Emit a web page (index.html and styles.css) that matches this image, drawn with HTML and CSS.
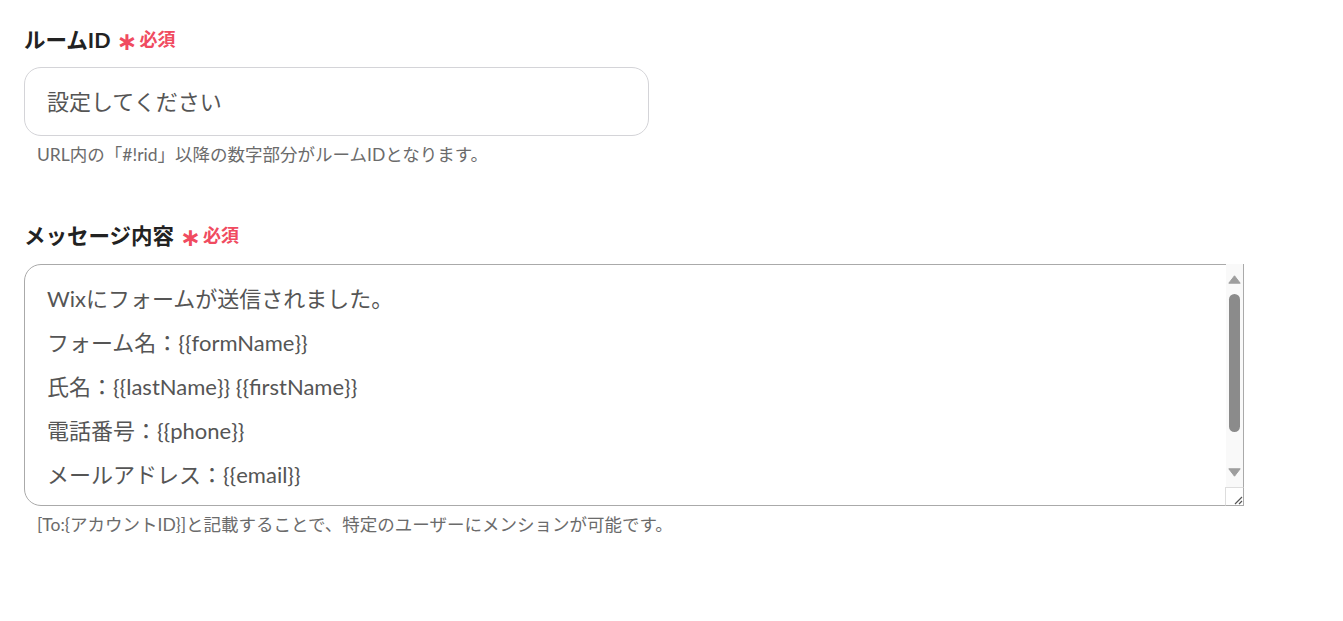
FILE: index.html
```html
<!DOCTYPE html>
<html lang="ja">
<head>
  <meta charset="UTF-8">
  <link rel="stylesheet" href="styles.css">
  <title>Chatwork 設定</title>
</head>
<body>

<div class="form">
  <div class="field">
    <label class="label">ルームID<span class="req"><span class="star">∗</span>必須</span></label>
    <input type="text" class="input" placeholder="設定してください">
    <p class="help">URL内の「#!rid」以降の数字部分がルームIDとなります。</p>
  </div>

  <div class="field">
    <label class="label">メッセージ内容<span class="req"><span class="star">∗</span>必須</span></label>
    <div class="textarea-wrap">
      <textarea class="textarea">Wixにフォームが送信されました。
フォーム名：{{formName}}
氏名：{{lastName}} {{firstName}}
電話番号：{{phone}}
メールアドレス：{{email}}
</textarea>
      <div class="scrollbar">
        <svg class="arrow" width="13" height="9" viewBox="0 0 13 9"><path d="M6.5 0.8 L12.2 8.2 L0.8 8.2 Z" fill="#9e9e9e" stroke="#9e9e9e" stroke-linejoin="round"/></svg>
        <div class="scroll-track"><div class="scroll-thumb"></div></div>
        <svg class="arrow" width="13" height="9" viewBox="0 0 13 9"><path d="M0.8 0.8 L12.2 0.8 L6.5 8.2 Z" fill="#9e9e9e" stroke="#9e9e9e" stroke-linejoin="round"/></svg>
      </div>
      <div class="grip">
        <svg width="10" height="10" viewBox="0 0 10 10"><path d="M9 2 L2 9 M9 6 L6 9" stroke="#555" stroke-width="1.2"/></svg>
      </div>
    </div>
    <p class="help">[To:{アカウントID}]と記載することで、特定のユーザーにメンションが可能です。</p>
  </div>
</div>

</body>
</html>
```

FILE: styles.css
```css
body {
  margin: 0;
  background: #fff;
  font-family: "Lato", "Noto Sans CJK JP", sans-serif;
  color: #333;
}

.form {
  padding: 24px 24px 0 24px;
}

.field {
  margin-bottom: 53px;
}

.label {
  display: flex;
  align-items: center;
  font-size: 21.5px;
  font-weight: bold;
  color: #222;
  height: 28px;
}

.req {
  display: flex;
  align-items: center;
  color: #f04b60;
  font-size: 18px;
  margin-left: 6px;
}

.star {
  font-family: "DejaVu Sans", sans-serif;
  font-size: 25px;
  font-weight: bold;
  margin-right: 2px;
  position: relative;
  top: 3px;
}

.input {
  display: block;
  box-sizing: border-box;
  width: 625px;
  height: 69px;
  margin-top: 15px;
  padding: 0 22px;
  border: 1px solid #d4d4d8;
  border-radius: 17px;
  font-family: inherit;
  font-size: 22px;
  color: #555;
  outline: none;
}

.input::placeholder {
  color: #555;
}

.textarea-wrap {
  position: relative;
  width: 1220px;
  margin-top: 16px;
}

.textarea {
  display: block;
  box-sizing: border-box;
  width: 100%;
  height: 242px;
  padding: 12px 40px 30px 22px;
  border: 1px solid #aaa;
  border-radius: 17px;
  font-family: inherit;
  font-size: 22px;
  line-height: 44px;
  color: #555;
  overflow: hidden;
  resize: none;
  outline: none;
}

.scrollbar {
  position: absolute;
  top: 0;
  right: 0;
  bottom: 19px;
  width: 18px;
  background: #f9f9f9;
  border-right: 1px solid #aaa;
  display: flex;
  flex-direction: column;
  align-items: center;
  padding: 11px 0 10px 0;
  box-sizing: border-box;
}

.arrow {
  flex: none;
}

.scroll-track {
  flex: 1;
  width: 100%;
  display: flex;
  justify-content: center;
  padding: 10px 0 35px 0;
}

.scroll-thumb {
  width: 11px;
  height: 138px;
  background: #8b8b8b;
  border-radius: 6px;
}

.grip {
  position: absolute;
  right: 0;
  bottom: 0;
  width: 19px;
  height: 19px;
  box-sizing: border-box;
  background: #fff;
  border-left: 1px solid #ddd;
  border-top: 1px solid #ddd;
  border-right: 1px solid #aaa;
  border-bottom: 1px solid #aaa;
  display: flex;
  align-items: flex-end;
  justify-content: flex-end;
}

.help {
  margin: 7px 0 0 13px;
  font-size: 17.5px;
  line-height: 24px;
  color: #6b6b6b;
}
```
